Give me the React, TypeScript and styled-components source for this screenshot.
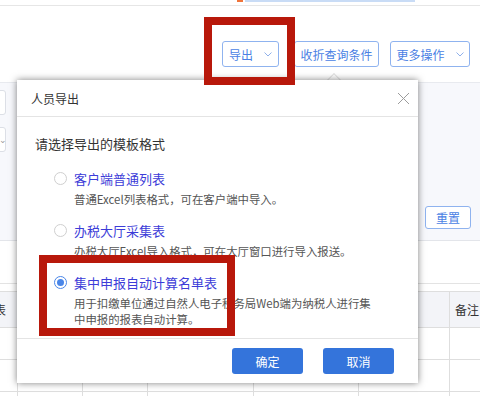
import React from "react";
import styled, { createGlobalStyle } from "styled-components";

const GlobalStyle = createGlobalStyle`
  html, body {
    margin: 0;
    padding: 0;
    background: #fff;
  }
  body {
    font-family: "Noto Sans CJK SC", "Noto Sans", sans-serif;
    color: #333;
  }
`;

const Page = styled.div`
  position: relative;
  width: 480px;
  height: 396px;
  overflow: hidden;
  background: #fff;
`;

const TopStrip = styled.div`
  display: flex;
  align-items: flex-start;
  height: 5px;
  padding-left: 237px;
  border-bottom: 1px solid #e6e6e6;
`;

const StripMark = styled.div<{ $tone: "orange" | "blue"; $w: number }>`
  width: ${({ $w }) => $w}px;
  height: 2px;
  margin-right: 2px;
  background: ${({ $tone }) => ($tone === "orange" ? "#f0743a" : "#c9dcf6")};
`;

const Toolbar = styled.div`
  display: flex;
  justify-content: flex-end;
  align-items: flex-start;
  height: 76px;
  box-sizing: border-box;
  padding: 35px 10px 0 0;
`;

const ToolButton = styled.button<{ $w: number; $gap: number }>`
  display: flex;
  align-items: center;
  justify-content: center;
  gap: 11px;
  width: ${({ $w }) => $w}px;
  height: 26px;
  margin-left: ${({ $gap }) => $gap}px;
  padding: 0;
  border: 1px solid #8fb3ef;
  border-radius: 3px;
  background: #fff;
  color: #4a7fe4;
  font-family: inherit;
  font-size: 12px;
`;

const Chevron = () => (
  <svg width="8" height="5" viewBox="0 0 8 5">
    <path d="M0.5 0.5 L4 4 L7.5 0.5" fill="none" stroke="#8fb0ea" strokeWidth="1" />
  </svg>
);

const FilterPanel = styled.div`
  display: flex;
  justify-content: space-between;
  align-items: flex-end;
  height: 146px;
  padding: 0 9px 11px 0;
  border-top: 1px solid #e8eaef;
  border-bottom: 1px solid #e3e5ea;
  background: #f7f8fc;
`;

const Fields = styled.div`
  display: flex;
  flex-direction: column;
  gap: 12px;
  align-self: flex-start;
  margin-top: 7px;
  margin-left: -40px;
`;

const Field = styled.div`
  display: flex;
  align-items: center;
  width: 46px;
  height: 25px;
  box-sizing: border-box;
  border: 1px solid #dcdfe6;
  border-radius: 3px;
  background: #fff;
  padding-left: 38px;
  color: #999;
  font-size: 9px;
`;

const ResetButton = styled.button`
  width: 46px;
  height: 23px;
  padding: 0;
  border: 1px solid #8fb3ef;
  border-radius: 3px;
  background: #fff;
  color: #4a7fe4;
  font-family: inherit;
  font-size: 12px;
`;

const TabBar = styled.div`
  height: 42px;
  border-bottom: 1px solid #e3e3e3;
  margin-bottom: 7px;
`;

const Grid = styled.div`
  display: grid;
  grid-template-columns: 17px 64px 64px 105px 104px 90px 60px;
  grid-template-rows: 35px 31px 31px 31px;
  gap: 1px;
  padding-top: 1px;
  background: #dedede;
`;

const Cell = styled.div<{ $head?: boolean; $end?: boolean }>`
  display: flex;
  align-items: center;
  justify-content: ${({ $end }) => ($end ? "flex-end" : "flex-start")};
  overflow: hidden;
  white-space: nowrap;
  padding: ${({ $end }) => ($end ? "0 11px 0 0" : "0 0 0 7px")};
  background: ${({ $head }) => ($head ? "#f3f4f8" : "#fff")};
  color: #333;
  font-size: 12px;
`;

const PopArrow = styled.div`
  position: absolute;
  left: 329px;
  top: 75px;
  width: 9px;
  height: 9px;
  transform: rotate(45deg);
  border-top: 1px solid #e2e2e2;
  border-left: 1px solid #e2e2e2;
  background: #fff;
`;

const Modal = styled.div`
  position: absolute;
  left: 17px;
  top: 80px;
  width: 401px;
  height: 303px;
  display: flex;
  flex-direction: column;
  background: #fff;
  box-shadow: 0 0 7px rgba(0, 0, 0, 0.5);
`;

const ModalHeader = styled.div`
  display: flex;
  align-items: center;
  justify-content: space-between;
  height: 36px;
  padding: 0 8px 0 14px;
  border-bottom: 1px solid #e4e4e4;
  font-size: 12px;
  color: #333;
`;

const ModalBody = styled.div`
  flex: 1;
  padding: 17px 18px 0;
`;

const Prompt = styled.div`
  font-size: 13px;
  line-height: 20px;
  color: #333;
`;

const Options = styled.div`
  display: flex;
  flex-direction: column;
  gap: 13px;
  margin: 14px 0 0 19px;
`;

const OptionRow = styled.div`
  display: flex;
  align-items: center;
  gap: 7px;
  height: 20px;
`;

const Radio = styled.span<{ $checked?: boolean }>`
  display: flex;
  align-items: center;
  justify-content: center;
  width: 13px;
  height: 13px;
  box-sizing: border-box;
  border-radius: 50%;
  border: 1px solid ${({ $checked }) => ($checked ? "#4a86e8" : "#cfcfcf")};
  background: #fff;

  &::after {
    content: "";
    display: ${({ $checked }) => ($checked ? "block" : "none")};
    width: 7px;
    height: 7px;
    border-radius: 50%;
    background: #4a86e8;
  }
`;

const OptionLabel = styled.span`
  font-size: 13px;
  color: #3c3cd8;
`;

const OptionDesc = styled.div<{ $first?: boolean }>`
  margin: ${({ $first }) => ($first ? "3px" : "0")} 0 0 20px;
  font-size: 11.4px;
  line-height: 16px;
  color: #555;
`;

const ModalFooter = styled.div`
  display: flex;
  justify-content: flex-end;
  gap: 20px;
  height: 45px;
  box-sizing: border-box;
  padding: 9px 24px 0 0;
  border-top: 1px solid #e4e4e4;
`;

const PrimaryButton = styled.button`
  width: 71px;
  height: 26px;
  padding: 0;
  border: none;
  border-radius: 3px;
  background: #3474db;
  color: #fff;
  font-family: inherit;
  font-size: 12px;
`;

const Mark = styled.div<{ $x: number; $y: number; $w: number; $h: number }>`
  position: absolute;
  left: ${({ $x }) => $x}px;
  top: ${({ $y }) => $y}px;
  width: ${({ $w }) => $w}px;
  height: ${({ $h }) => $h}px;
  box-sizing: border-box;
  border: 8px solid #b8180b;
`;

const CloseIcon = () => (
  <svg width="13" height="13" viewBox="0 0 13 13">
    <path d="M1 1 L12 12 M12 1 L1 12" stroke="#9c9c9c" strokeWidth="1" fill="none" />
  </svg>
);

const options = [
  { label: "客户端普通列表", desc: ["普通Excel列表格式，可在客户端中导入。"] },
  { label: "办税大厅采集表", desc: ["办税大厅Excel导入格式，可在大厅窗口进行导入报送。"] },
  {
    label: "集中申报自动计算名单表",
    desc: ["用于扣缴单位通过自然人电子税务局Web端为纳税人进行集", "中申报的报表自动计算。"],
    checked: true,
  },
];

// only the first and last headers peek out from behind the dialog
const headers = ["人员列表", "", "", "", "", "", "备注"];
const rows = [
  ["", "", "", "", "", "", ""],
  ["", "", "", "", "", "", ""],
  ["", "否", "否", "启用", "", "中国", ""],
];

export default function App() {
  return (
    <Page>
      <GlobalStyle />
      <TopStrip>
        <StripMark $tone="orange" $w={6} />
        <StripMark $tone="blue" $w={170} />
      </TopStrip>
      <Toolbar>
        <ToolButton $w={57} $gap={0}>
          导出
          <Chevron />
        </ToolButton>
        <ToolButton $w={85} $gap={15}>收折查询条件</ToolButton>
        <ToolButton $w={80} $gap={11}>
          更多操作
          <Chevron />
        </ToolButton>
      </Toolbar>
      <FilterPanel>
        <Fields>
          <Field />
          <Field>⌄</Field>
        </Fields>
        <ResetButton>重置</ResetButton>
      </FilterPanel>
      <TabBar />
      <Grid>
        {headers.map((h, i) => (
          <Cell key={i} $head $end={i === 0} style={i === 6 ? { paddingLeft: 5 } : undefined}>
            {h}
          </Cell>
        ))}
        {rows.map((r, ri) =>
          r.map((c, ci) => <Cell key={`${ri}-${ci}`}>{c}</Cell>)
        )}
      </Grid>
      <PopArrow />
      <Modal>
        <ModalHeader>
          <span>人员导出</span>
          <CloseIcon />
        </ModalHeader>
        <ModalBody>
          <Prompt>请选择导出的模板格式</Prompt>
          <Options>
            {options.map((o) => (
              <div key={o.label}>
                <OptionRow>
                  <Radio $checked={o.checked} />
                  <OptionLabel>{o.label}</OptionLabel>
                </OptionRow>
                {o.desc.map((d, di) => (
                  <OptionDesc key={d} $first={di === 0}>
                    {d}
                  </OptionDesc>
                ))}
              </div>
            ))}
          </Options>
        </ModalBody>
        <ModalFooter>
          <PrimaryButton>确定</PrimaryButton>
          <PrimaryButton>取消</PrimaryButton>
        </ModalFooter>
      </Modal>
      <Mark $x={204} $y={17} $w={91} $h={68} />
      <Mark $x={39} $y={255} $w={196} $h={81} />
    </Page>
  );
}
